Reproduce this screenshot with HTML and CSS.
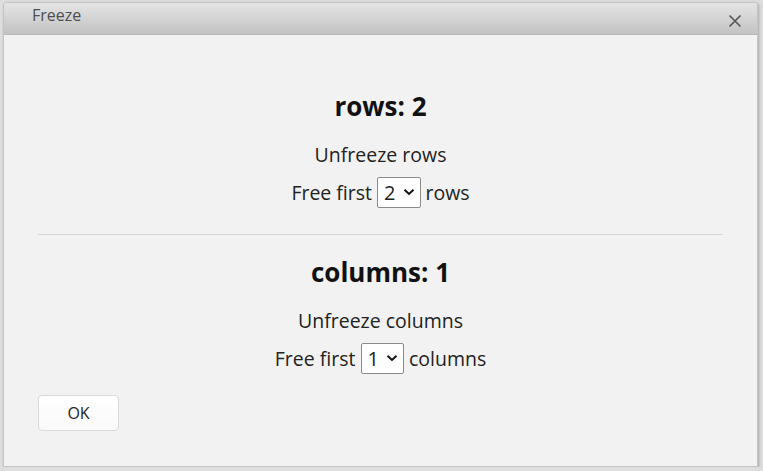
FILE: index.html
```html
<!DOCTYPE html>
<html lang="en-US">
<head>
  <meta charset="UTF-8">
  <title>Freeze</title>
  <link rel="stylesheet" href="styles.css">
</head>
<body>
  <div class="dialog">
    <div class="dialog-title">
      <span>Freeze</span>
      <button class="close" aria-label="Close">
        <svg width="14" height="14" viewBox="0 0 14 14">
          <path d="M1.5 1.5 L12.5 12.5 M12.5 1.5 L1.5 12.5" stroke="#555" stroke-width="1.6" fill="none"/>
        </svg>
      </button>
    </div>
    <div class="dialog-body">
      <section class="freeze-group">
        <h2>rows: 2</h2>
        <p>Unfreeze rows</p>
        <div class="free-line">
          Free first
          <span class="select">2
            <svg width="12" height="8" viewBox="0 0 12 8"><path d="M1.5 1.8 L6 6 L10.5 1.8" stroke="#111" stroke-width="2" fill="none"/></svg>
          </span>
          rows
        </div>
      </section>
      <hr>
      <section class="freeze-group">
        <h2>columns: 1</h2>
        <p>Unfreeze columns</p>
        <div class="free-line">
          Free first
          <span class="select">1
            <svg width="12" height="8" viewBox="0 0 12 8"><path d="M1.5 1.8 L6 6 L10.5 1.8" stroke="#111" stroke-width="2" fill="none"/></svg>
          </span>
          columns
        </div>
      </section>
      <div class="buttons">
        <button class="ok">OK</button>
      </div>
    </div>
  </div>
</body>
</html>
```

FILE: styles.css
```css
body {
  margin: 0;
  background-color: #dedede;
  font-family: 'Open Sans', sans-serif;
  color: #222;
}
.dialog {
  margin: 2px 5px 0 3px;
  height: 463px;
  background-color: #f2f2f2;
  border: 1px solid #c4c4c4;
  border-radius: 4px 4px 0 0;
  box-shadow: 1px 1px 3px rgba(0, 0, 0, 0.25);
  overflow: hidden;
}
.dialog-title {
  height: 31px;
  display: flex;
  align-items: center;
  justify-content: space-between;
  padding: 0 15px 0 28px;
  background: linear-gradient(#e4e4e4, #c3c3c3);
  border-bottom: 1px solid #b8b8b8;
  font-size: 16px;
  color: #4e4e4e;
}
.dialog-title span {
  margin-top: -8px;
}
.close {
  border: none;
  background: none;
  padding: 0;
  margin-top: 5px;
  display: flex;
  cursor: pointer;
}
.dialog-body {
  padding: 55px 34px 0 34px;
}
.freeze-group {
  text-align: center;
}
.freeze-group h2 {
  margin: 0;
  font-size: 26px;
  line-height: 33px;
  font-weight: 700;
  color: #111;
}
.freeze-group p {
  margin: 20px 0 0;
  font-size: 19.5px;
  line-height: 24px;
}
.free-line {
  margin-top: 9px;
  font-size: 19.5px;
  height: 32px;
  display: flex;
  align-items: center;
  justify-content: center;
  gap: 5px;
}
.select {
  display: inline-flex;
  align-items: center;
  gap: 7px;
  height: 29px;
  padding: 0 5px 0 6px;
  background-color: #fff;
  border: 1px solid #8a8a8a;
  border-radius: 2px;
  font-size: 20px;
  color: #222;
}
hr {
  margin: 26px 0 21px;
  border: none;
  border-top: 1px solid #d6d6d6;
}
.buttons {
  margin-top: 21px;
}
.ok {
  width: 81px;
  height: 36px;
  background: linear-gradient(#ffffff, #f9f9f9);
  border: 1px solid #dadada;
  border-radius: 4px;
  font-family: 'Open Sans', sans-serif;
  font-size: 16px;
  color: #222;
  cursor: pointer;
}
```
